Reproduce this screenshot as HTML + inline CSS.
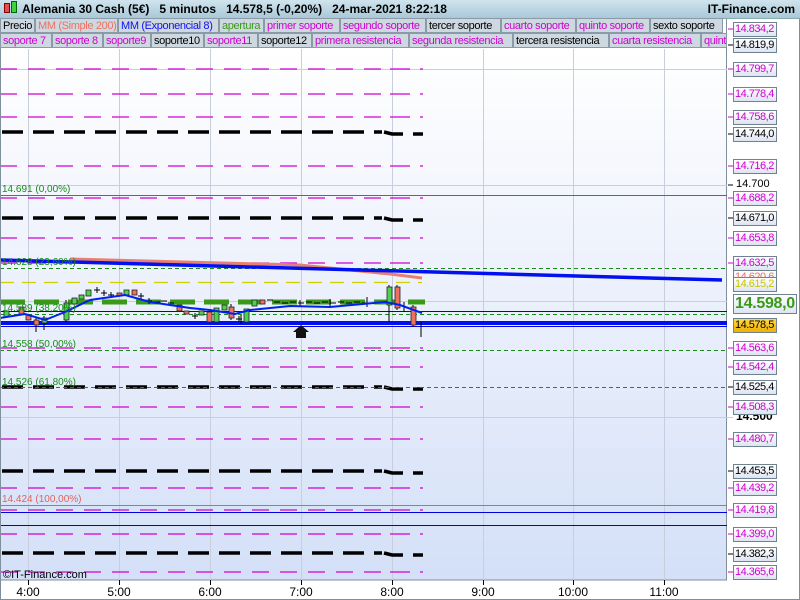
<!DOCTYPE html>
<html><head><meta charset="utf-8"><style>
*{margin:0;padding:0}
body{width:800px;height:600px;overflow:hidden;background:#fff;font-family:"Liberation Sans",sans-serif;position:relative}
#hdr{position:absolute;left:0;top:0;width:800px;height:18px;background:linear-gradient(#d0e4ee,#a9c8d8);border-bottom:1px solid #8aa;font-weight:bold;font-size:12px;line-height:18px}
.lg{position:absolute;height:15px;font-size:11px;letter-spacing:-0.35px;line-height:15px;background:#cdd8e0;border:1px solid #8a9aa6;box-sizing:border-box;padding-left:2px;white-space:nowrap;overflow:hidden;color:#d000d0}
.rl{position:absolute;left:733px;width:44px;height:15px;box-sizing:border-box;border:1px solid #6f8290;background:linear-gradient(#fff,#dde4f2);font-size:11px;letter-spacing:-0.5px;line-height:13px;padding-left:1px;color:#d000d0;white-space:nowrap;overflow:hidden}
.k{color:#000}
.t{position:absolute;top:585px;font-size:12px;width:40px;text-align:center}
</style></head><body>
<svg width="800" height="600" style="position:absolute;left:0;top:0">
<defs><linearGradient id="bg" x1="0" y1="0" x2="0" y2="1"><stop offset="0" stop-color="#ffffff"/><stop offset="0.4" stop-color="#eef2fc"/><stop offset="1" stop-color="#d4e0f8"/></linearGradient></defs>
<rect x="0" y="49" width="727" height="531" fill="url(#bg)"/>
<rect x="0.5" y="18" width="726" height="562" fill="none" stroke="#7f8f9c"/>
<g stroke="#c8cede" stroke-width="1">
<line x1="28.5" y1="49" x2="28.5" y2="580"/><line x1="119.5" y1="49" x2="119.5" y2="580"/><line x1="210.5" y1="49" x2="210.5" y2="580"/><line x1="301.5" y1="49" x2="301.5" y2="580"/><line x1="392.5" y1="49" x2="392.5" y2="580"/><line x1="483.5" y1="49" x2="483.5" y2="580"/><line x1="573.5" y1="49" x2="573.5" y2="580"/><line x1="664.5" y1="49" x2="664.5" y2="580"/>
<line x1="0" y1="69.5" x2="727" y2="69.5"/><line x1="0" y1="185.5" x2="727" y2="185.5"/><line x1="0" y1="301.5" x2="727" y2="301.5"/><line x1="0" y1="417.5" x2="733" y2="417.5"/>
</g>
<g stroke="#d000d0" stroke-width="1.3">
<g stroke-dasharray="17,11">
<line x1="0" y1="69" x2="388" y2="69"/><line x1="0" y1="94" x2="388" y2="94"/><line x1="0" y1="117" x2="388" y2="117"/><line x1="0" y1="166" x2="388" y2="166"/><line x1="0" y1="198" x2="388" y2="198"/><line x1="0" y1="238" x2="388" y2="238"/><line x1="0" y1="263" x2="388" y2="263"/><line x1="0" y1="348" x2="388" y2="348"/><line x1="0" y1="367" x2="388" y2="367"/><line x1="0" y1="407" x2="388" y2="407"/><line x1="0" y1="439" x2="388" y2="439"/><line x1="0" y1="488" x2="388" y2="488"/><line x1="0" y1="510" x2="388" y2="510"/><line x1="0" y1="534" x2="388" y2="534"/><line x1="0" y1="572" x2="388" y2="572"/>
</g>
<path d="M390 69h20M420 69h3M390 94h20M420 94h3M390 117h20M420 117h3M390 166h20M420 166h3M390 198h20M420 198h3M390 238h20M420 238h3M390 263h20M420 263h3M390 348h20M420 348h3M390 367h20M420 367h3M390 407h20M420 407h3M390 439h20M420 439h3M390 488h20M420 488h3M390 510h20M420 510h3M390 534h20M420 534h3M390 572h20M420 572h3"/>
</g>
<g stroke="#000" stroke-width="3.5">
<g stroke-dasharray="21,10">
<line x1="2" y1="132" x2="382" y2="132"/><line x1="2" y1="218" x2="382" y2="218"/><line x1="2" y1="387" x2="382" y2="387"/><line x1="2" y1="471" x2="382" y2="471"/><line x1="2" y1="553" x2="382" y2="553"/>
</g>
<path d="M384 132l8 2h11M413 134h10M384 218l8 2h11M413 220h10M384 387l8 2h11M413 389h10M384 471l8 2h11M413 473h10M384 553l8 2h11M413 555h10"/>
</g>
<line x1="0" y1="195.5" x2="727" y2="195.5" stroke="#5a6a70"/>
<line x1="0" y1="505.5" x2="727" y2="505.5" stroke="#e06060"/>
<line x1="0" y1="512.5" x2="727" y2="512.5" stroke="#0000e0"/>
<line x1="0" y1="525.5" x2="727" y2="525.5" stroke="#0000e0"/>
<g stroke="#1a8a1a" stroke-dasharray="4,3"><line x1="0" y1="268.5" x2="727" y2="268.5"/><line x1="0" y1="314.5" x2="727" y2="314.5"/><line x1="0" y1="350.5" x2="727" y2="350.5"/><line x1="0" y1="387.5" x2="727" y2="387.5"/></g>
<line x1="0" y1="282.5" x2="422" y2="282.5" stroke="#d0d000" stroke-width="1.3" stroke-dasharray="14,8"/>
<line x1="0" y1="302" x2="425" y2="302" stroke="#3a9a18" stroke-width="5" stroke-dasharray="25,9"/>
<path d="M70 259 L300 265 L390 274 L422 278" stroke="#e88070" stroke-width="3" fill="none"/>
<path d="M0 260 L722 280" stroke="#0010f0" stroke-width="3.5" fill="none"/>
<line x1="0" y1="311.5" x2="727" y2="311.5" stroke="#0000e0"/>
<rect x="0" y="321" width="727" height="4" fill="#0010f0"/>
<line x1="0" y1="326.5" x2="727" y2="326.5" stroke="#0000e0"/>
<g stroke="#000" stroke-width="1">
<line x1="36" y1="318" x2="36" y2="332"/><line x1="44" y1="316" x2="44" y2="330"/><line x1="66" y1="300" x2="66" y2="322"/><line x1="389" y1="285" x2="389" y2="322"/><line x1="397" y1="285" x2="397" y2="310"/><line x1="421" y1="322" x2="421" y2="337"/><line x1="404" y1="302" x2="404" y2="312"/><line x1="413" y1="305" x2="413" y2="327"/><line x1="241" y1="315" x2="241" y2="324"/><line x1="231" y1="304" x2="231" y2="320"/>
<path d="M94 290h6M97 287v6M101 293h6M104 290v6M108 295h6M111 292v6M138 296h6M141 293v6M146 301h6M149 298v6M154 302h6M161 301h6M168 303h6M192 316h6M195 313v6M236 319h6M239 316v6M267 300h6M274 302h6M282 303h6M290 302h6M298 303h6M306 302h6M314 303h6M322 302h6M330 303h6M338 302h6M346 303h6M354 302h6M362 303h6M370 303h6M378 302h6M367 297v10M330 299v7M300 300v7"/>
</g>
<g stroke="#222" stroke-width="0.8">
<rect x="4" y="311" width="5" height="6" fill="#50d050"/><rect x="19" y="307" width="5" height="7" fill="#f07060"/><rect x="26" y="315" width="5" height="5" fill="#f07060"/><rect x="34" y="320" width="5" height="5" fill="#f07060"/><rect x="42" y="318" width="5" height="5" fill="#50d050"/><rect x="64" y="303" width="5" height="17" fill="#50d050"/><rect x="72" y="298" width="5" height="6" fill="#50d050"/><rect x="79" y="295" width="5" height="4" fill="#50d050"/><rect x="86" y="290" width="5" height="6" fill="#50d050"/><rect x="117" y="293" width="5" height="3" fill="#f07060"/><rect x="124" y="290" width="5" height="5" fill="#50d050"/><rect x="132" y="290" width="5" height="5" fill="#f07060"/><rect x="177" y="305" width="5" height="6" fill="#f07060"/><rect x="184" y="311" width="5" height="3" fill="#f07060"/><rect x="199" y="311" width="5" height="4" fill="#50d050"/><rect x="207" y="312" width="5" height="10" fill="#f07060"/><rect x="214" y="308" width="5" height="14" fill="#50d050"/><rect x="222" y="305" width="5" height="5" fill="#50d050"/><rect x="229" y="307" width="5" height="11" fill="#f07060"/><rect x="244" y="309" width="5" height="13" fill="#50d050"/><rect x="252" y="300" width="5" height="6" fill="#50d050"/><rect x="260" y="300" width="5" height="4" fill="#f07060"/><rect x="387" y="287" width="5" height="18" fill="#50d050"/><rect x="395" y="287" width="5" height="21" fill="#f07060"/><rect x="411" y="307" width="5" height="18" fill="#f07060"/>
</g>
<path d="M0 318 L25 314 L45 320 L65 312 L90 300 L125 295 L150 302 L190 308 L210 310 L235 314 L250 310 L290 306 L330 307 L385 302 L400 305 L422 313" stroke="#0020f0" stroke-width="2" fill="none"/>
<path d="M296 338h10v-6h3l-8-7-8 7h3z" fill="#111"/>
<g font-size="10" font-family="Liberation Sans,sans-serif">
<text x="2" y="192" fill="#1a8a1a">14.691 (0,00%)</text>
<text x="2" y="265" fill="#1a8a1a">14.628 (23,60%)</text>
<text x="2" y="311" fill="#1a8a1a">14.589 (38,20%)</text>
<text x="2" y="347" fill="#1a8a1a">14.558 (50,00%)</text>
<text x="2" y="385" fill="#1a8a1a">14.526 (61,80%)</text>
<text x="2" y="502" fill="#e06060">14.424 (100,00%)</text>
<text x="3" y="578" fill="#000" font-size="11">©IT-Finance.com</text>
</g>
<g stroke="#000"><path d="M728 45h5M728 134h5M728 185h5M728 218h5M728 387h5M728 471h5M728 554h5"/></g>
<g stroke="#d000d0"><path d="M728 29h5M728 69h5M728 94h5M728 117h5M728 166h5M728 198h5M728 238h5M728 263h5M728 348h5M728 367h5M728 407h5M728 439h5M728 488h5M728 510h5M728 534h5M728 572h5"/></g>
<path d="M28.5 580v5M119.5 580v5M210.5 580v5M301.5 580v5M392.5 580v5M483.5 580v5M573.5 580v5M664.5 580v5" stroke="#000"/>
<rect x="0.5" y="0.5" width="799" height="599" fill="none" stroke="#7f8f9c"/>
</svg>
<div id="hdr"><span style="position:absolute;left:4px;top:3px;width:4px;height:8px;background:#e05050;border:1px solid #800"></span><span style="position:absolute;left:11px;top:1px;width:4px;height:10px;background:#40d040;border:1px solid #060"></span><span style="position:absolute;left:22px">Alemania 30 Cash (5€)&nbsp;&nbsp;&nbsp;5 minutos&nbsp;&nbsp;&nbsp;14.578,5 (-0,20%)&nbsp;&nbsp;&nbsp;24-mar-2021 8:22:18</span><span style="position:absolute;right:5px">IT-Finance.com</span></div>
<div class="lg k" style="left:0;top:18px;width:35px">Precio</div>
<div class="lg" style="left:35px;top:18px;width:83px;color:#f07060">MM (Simple 200)</div>
<div class="lg" style="left:118px;top:18px;width:101px;color:#1010f0">MM (Exponencial 8)</div>
<div class="lg" style="left:219px;top:18px;width:45px;color:#3a9a18">apertura</div>
<div class="lg" style="left:264px;top:18px;width:76px">primer soporte</div>
<div class="lg" style="left:340px;top:18px;width:86px">segundo soporte</div>
<div class="lg k" style="left:426px;top:18px;width:75px">tercer soporte</div>
<div class="lg" style="left:501px;top:18px;width:75px">cuarto soporte</div>
<div class="lg" style="left:576px;top:18px;width:74px">quinto soporte</div>
<div class="lg k" style="left:650px;top:18px;width:73px">sexto soporte</div>
<div class="lg" style="left:0;top:33px;width:52px">soporte 7</div>
<div class="lg" style="left:52px;top:33px;width:51px">soporte 8</div>
<div class="lg" style="left:103px;top:33px;width:48px">soporte9</div>
<div class="lg k" style="left:151px;top:33px;width:53px">soporte10</div>
<div class="lg" style="left:204px;top:33px;width:54px">soporte11</div>
<div class="lg k" style="left:258px;top:33px;width:54px">soporte12</div>
<div class="lg" style="left:312px;top:33px;width:97px">primera resistencia</div>
<div class="lg" style="left:409px;top:33px;width:104px">segunda resistencia</div>
<div class="lg k" style="left:513px;top:33px;width:96px">tercera resistencia</div>
<div class="lg" style="left:609px;top:33px;width:92px">cuarta resistencia</div>
<div class="lg" style="left:701px;top:33px;width:26px">quinta</div>
<div class="rl" style="top:22px">14.834,2</div>
<div class="rl k" style="top:38px">14.819,9</div>
<div class="rl" style="top:62px">14.799,7</div>
<div class="rl" style="top:87px">14.778,4</div>
<div class="rl" style="top:110px">14.758,6</div>
<div class="rl k" style="top:127px">14.744,0</div>
<div class="rl" style="top:159px">14.716,2</div>
<div style="position:absolute;left:736px;top:178px;font-size:11px">14.700</div>
<div class="rl" style="top:191px">14.688,2</div>
<div class="rl k" style="top:211px">14.671,0</div>
<div class="rl" style="top:231px">14.653,8</div>
<div class="rl" style="top:270px;color:#f07060">14.620,6</div>
<div class="rl" style="top:256px">14.632,5</div>
<div class="rl" style="top:277px;color:#c8c800">14.615,2</div>
<div class="rl" style="top:294px;left:733px;width:64px;height:20px;font-size:16px;letter-spacing:-0.3px;line-height:18px;font-weight:bold;color:#3a9a18">14.598,0</div>
<div class="rl k" style="top:318px;background:linear-gradient(#ffd84a,#f0b000)">14.578,5</div>
<div class="rl" style="top:341px">14.563,6</div>
<div class="rl" style="top:360px">14.542,4</div>
<div class="rl k" style="top:380px">14.525,4</div>
<div style="position:absolute;left:736px;top:409px;font-size:12px;font-weight:bold">14.500</div>
<div class="rl" style="top:400px">14.508,3</div>
<div class="rl" style="top:432px">14.480,7</div>
<div class="rl k" style="top:464px">14.453,5</div>
<div class="rl" style="top:481px">14.439,2</div>
<div class="rl" style="top:503px">14.419,8</div>
<div class="rl" style="top:527px">14.399,0</div>
<div class="rl k" style="top:547px">14.382,3</div>
<div class="rl" style="top:565px">14.365,6</div>
<div class="t" style="left:8px">4:00</div><div class="t" style="left:99px">5:00</div><div class="t" style="left:190px">6:00</div><div class="t" style="left:281px">7:00</div><div class="t" style="left:372px">8:00</div><div class="t" style="left:463px">9:00</div><div class="t" style="left:553px">10:00</div><div class="t" style="left:644px">11:00</div>
</body></html>
